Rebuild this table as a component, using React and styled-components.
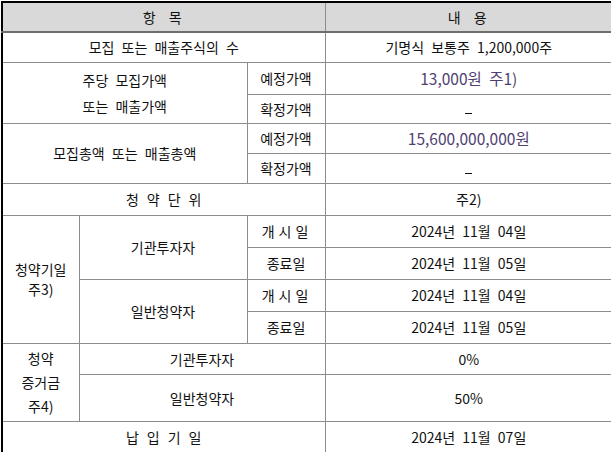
import React from "react";
import styled, { createGlobalStyle } from "styled-components";

const GlobalStyle = createGlobalStyle`
  html, body {
    margin: 0;
    padding: 0;
    background: #ffffff;
    overflow: hidden;
  }
  body {
    font-family: "Noto Sans CJK KR", "DejaVu Sans", sans-serif;
  }
`;

const Page = styled.div`
  padding: 1px 0 0 1px;
  width: 611px;
`;

const Table = styled.table`
  border-collapse: collapse;
  width: 611px;
  table-layout: fixed;
  border-top: 2px solid #000000;
  border-left: 2px solid #000000;
  font-size: 14px;
  color: #111111;
`;

const Row = styled.tr`
  height: ${(p) => p.$h}px;
`;

const HeadCell = styled.th`
  background: #d9d9d9;
  font-weight: normal;
  font-size: 14px;
  text-align: center;
  border-bottom: 2px solid #6e6e6e;
  border-right: 1px solid #8c8c8c;
  padding: 0;
  letter-spacing: 3px;
  word-spacing: 4px;
  &:last-child {
    border-right: none;
  }
`;

const Cell = styled.td`
  text-align: center;
  vertical-align: middle;
  border-bottom: 1px solid #8c8c8c;
  border-right: 1px solid #8c8c8c;
  padding: 0;
  line-height: ${(p) => p.$lh || "normal"};
  letter-spacing: ${(p) => p.$ls || "0"};
  word-spacing: 4px;
  color: ${(p) => (p.$value ? "#4f3f73" : "#111111")};
  font-size: ${(p) => (p.$value ? "15.5px" : "14px")};
  &:last-child {
    border-right: none;
  }
`;

const Spaced = styled(Cell)`
  letter-spacing: 8px;
  word-spacing: 0;
  padding-left: 8px;
`;

const SubLabel = styled(Cell)`
  letter-spacing: ${(p) => (p.$wide ? "4px" : "0")};
  padding-left: ${(p) => (p.$wide ? "2px" : "0")};
`;

const Dash = styled.span`
  display: inline-block;
  width: 7px;
  height: 1px;
  background: #111111;
  vertical-align: middle;
  transform: translateY(3px);
`;

export default function App() {
  return (
    <Page>
      <GlobalStyle />
      <Table>
        <colgroup>
          <col style={{ width: 77 }} />
          <col style={{ width: 168 }} />
          <col style={{ width: 78 }} />
          <col />
        </colgroup>
        <tbody>
          <Row $h={30}>
            <HeadCell colSpan={3}>항 목</HeadCell>
            <HeadCell>내 용</HeadCell>
          </Row>
          <Row $h={30}>
            <Cell colSpan={3}>모집 또는 매출주식의 수</Cell>
            <Cell>기명식 보통주 1,200,000주</Cell>
          </Row>
          <Row $h={32}>
            <Cell colSpan={2} rowSpan={2} $lh="26px">
              주당 모집가액
              <br />
              또는 매출가액
            </Cell>
            <SubLabel>예정가액</SubLabel>
            <Cell $value>13,000원 주1)</Cell>
          </Row>
          <Row $h={29}>
            <SubLabel>확정가액</SubLabel>
            <Cell>
              <Dash />
            </Cell>
          </Row>
          <Row $h={30}>
            <Cell colSpan={2} rowSpan={2}>
              모집총액 또는 매출총액
            </Cell>
            <SubLabel>예정가액</SubLabel>
            <Cell $value>15,600,000,000원</Cell>
          </Row>
          <Row $h={30}>
            <SubLabel>확정가액</SubLabel>
            <Cell>
              <Dash />
            </Cell>
          </Row>
          <Row $h={32}>
            <Spaced colSpan={3}>청약단위</Spaced>
            <Cell>주2)</Cell>
          </Row>
          <Row $h={32}>
            <Cell rowSpan={4} $lh="20px">
              청약기일
              <br />
              주3)
            </Cell>
            <Cell rowSpan={2}>기관투자자</Cell>
            <SubLabel $wide>개시일</SubLabel>
            <Cell>2024년 11월 04일</Cell>
          </Row>
          <Row $h={32}>
            <SubLabel>종료일</SubLabel>
            <Cell>2024년 11월 05일</Cell>
          </Row>
          <Row $h={32}>
            <Cell rowSpan={2}>일반청약자</Cell>
            <SubLabel $wide>개시일</SubLabel>
            <Cell>2024년 11월 04일</Cell>
          </Row>
          <Row $h={32}>
            <SubLabel>종료일</SubLabel>
            <Cell>2024년 11월 05일</Cell>
          </Row>
          <Row $h={31}>
            <Cell rowSpan={2} $lh="24px">
              청약
              <br />
              증거금
              <br />
              주4)
            </Cell>
            <Cell colSpan={2}>기관투자자</Cell>
            <Cell>0%</Cell>
          </Row>
          <Row $h={47}>
            <Cell colSpan={2}>일반청약자</Cell>
            <Cell>50%</Cell>
          </Row>
          <Row $h={32}>
            <Spaced colSpan={3}>납입기일</Spaced>
            <Cell>2024년 11월 07일</Cell>
          </Row>
        </tbody>
      </Table>
    </Page>
  );
}
